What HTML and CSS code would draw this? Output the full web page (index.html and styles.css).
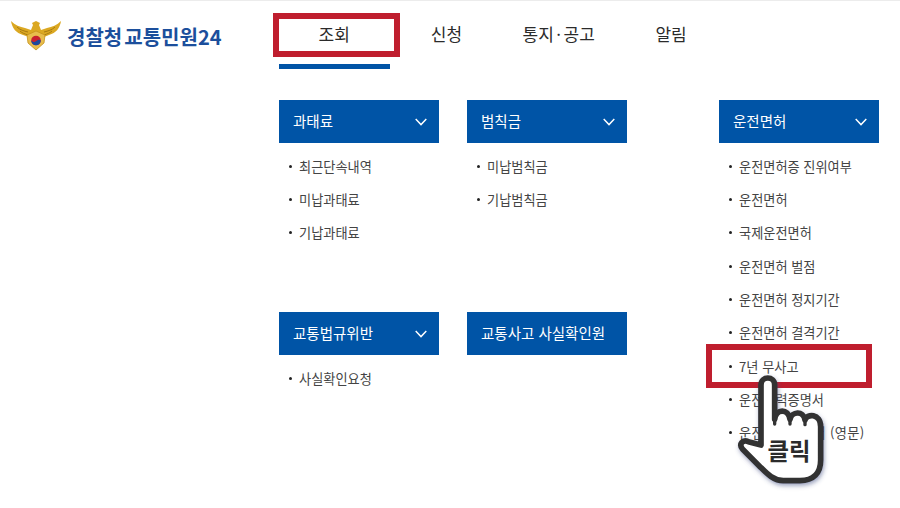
FILE: index.html
```html
<!DOCTYPE html>
<html lang="ko">
<head>
  <meta charset="UTF-8" />
  <meta name="viewport" content="width=device-width, initial-scale=1.0" />
  <title>경찰청 교통민원24</title>
  <link rel="stylesheet" href="styles.css">
</head>
<body>
  <div class="page">
    <header class="top">
      <a class="logo" href="#">
        <svg class="emblem" viewBox="0 0 50 32" width="50" height="32" aria-hidden="true">
          <path d="M0 1 C4 5 9 7 14 8 L20 10 L22 5 L21 3 L25 1 L29 3 L28 5 L30 10 L36 8 C41 7 46 5 50 1 C49 8 45 13 38 15 L33 17 L18 17 L12 15 C5 13 1 8 0 1 Z" fill="#dba822"/>
          <path d="M6 7 C9 10 13 11 17 12 M44 7 C41 10 37 11 33 12 M9 11 C11 13 14 14 17 15 M41 11 C39 13 36 14 33 15" fill="none" stroke="#a87a10" stroke-width="1"/>
          <path d="M16 15 L25 11 L34 15 L33 23 L25 30 L17 23 Z" fill="#e8bd4c" stroke="#c4921a" stroke-width=".8"/>
          <circle cx="25" cy="20.5" r="4.8" fill="#c8202f"/>
          <path d="M20.2 20.5 A4.8 4.8 0 0 0 29.8 20.5 C28.2 19 26.6 19.8 25 21.2 C23.4 22.6 21.6 22 20.2 20.5 Z" fill="#1c4a9c"/>
        </svg>
        <span class="logo-text">경찰청 교통민원24</span>
      </a>
      <nav class="gnb">
        <a class="gnb-item active" href="#">조회</a>
        <a class="gnb-item" href="#">신청</a>
        <a class="gnb-item" href="#">통지<span class="dot">·</span>공고</a>
        <a class="gnb-item" href="#">알림</a>
      </nav>
    </header>

    <main class="menu">
      <section class="group">
        <h2 class="group-title">과태료
          <svg class="chevron" viewBox="0 0 12 8" width="12" height="8"><path d="M.7.9 6 6.6 11.3.9" /></svg>
        </h2>
        <ul class="links">
          <li>최근단속내역</li>
          <li>미납과태료</li>
          <li>기납과태료</li>
        </ul>
      </section>
      <section class="group">
        <h2 class="group-title">범칙금
          <svg class="chevron" viewBox="0 0 12 8" width="12" height="8"><path d="M.7.9 6 6.6 11.3.9" /></svg>
        </h2>
        <ul class="links">
          <li>미납범칙금</li>
          <li>기납범칙금</li>
        </ul>
      </section>
      <section class="group group-tall">
        <h2 class="group-title">운전면허
          <svg class="chevron" viewBox="0 0 12 8" width="12" height="8"><path d="M.7.9 6 6.6 11.3.9" /></svg>
        </h2>
        <ul class="links">
          <li>운전면허증 진위여부</li>
          <li>운전면허</li>
          <li>국제운전면허</li>
          <li>운전면허 벌점</li>
          <li>운전면허 정지기간</li>
          <li>운전면허 결격기간</li>
          <li>7년 무사고</li>
          <li>운전경력증명서</li>
          <li class="wide">운전경력증명서 (영문)</li>
        </ul>
      </section>
      <section class="group">
        <h2 class="group-title">교통법규위반
          <svg class="chevron" viewBox="0 0 12 8" width="12" height="8"><path d="M.7.9 6 6.6 11.3.9" /></svg>
        </h2>
        <ul class="links">
          <li>사실확인요청</li>
        </ul>
      </section>
      <section class="group">
        <h2 class="group-title">교통사고 사실확인원</h2>
      </section>
    </main>

    <!-- 안내용 표시 -->
    <div class="mark mark-nav"></div>
    <div class="mark mark-item"></div>
    <svg class="hand" viewBox="0 0 630 534" width="210" height="178" aria-hidden="true">
      <defs>
        <filter id="handShadow" x="-20%" y="-20%" width="140%" height="140%">
          <feDropShadow dx="3" dy="7" stdDeviation="6" flood-color="#3a4a80" flood-opacity=".5"/>
        </filter>
      </defs>
      <path class="hand-shape" filter="url(#handShadow)" d="M213 345 L213 165 C213 137 254 137 254 165 L254 268 C258 235 295 235 300 268 C305 245 340 240 345 270 C350 250 392 250 392 290 L392 390 C392 430 370 452 330 452 L280 452 C250 452 230 430 210 410 L158 358 C145 342 158 328 175 335 Z"/>
      <path class="hand-line" d="M254 268 L254 282 M300 268 L300 282 M345 270 L345 284"/>
      <text class="hand-text" x="297" y="389">클릭</text>
    </svg>
  </div>
</body>
</html>
```

FILE: styles.css
```css
* {
  box-sizing: border-box;
}
body {
  margin: 0;
  font-family: "Noto Sans CJK KR", "Noto Sans", sans-serif;
  background: #fff;
  color: #333;
  overflow: hidden;
}
.page {
  position: relative;
  height: 508px;
  border-top: 1px solid #ececec;
}
a {
  color: inherit;
  text-decoration: none;
}

/* header */
.top {
  display: grid;
  grid-template-columns: 279px 1fr;
  height: 68px;
}
.logo {
  display: flex;
  align-items: flex-start;
  padding: 19px 0 0 11px;
}
.emblem {
  flex: none;
}
.logo-text {
  margin: 1px 0 0 6px;
  font-size: 20px;
  font-weight: 700;
  line-height: 32px;
  word-spacing: -3.5px;
  white-space: nowrap;
  color: #1c4f9c;
}
.gnb {
  display: flex;
  margin-left: -1px;
}
.gnb-item {
  width: 112.3px;
  padding-top: 19px;
  text-align: center;
  font-size: 17px;
  line-height: 28px;
  color: #2b2b2b;
}
.gnb-item .dot {
  margin: 0 2.5px;
}
.gnb-item.active {
  margin-left: 1px;
  width: 111.3px;
  padding-right: 1px;
  border-bottom: 5px solid #0054a6;
}

/* menu */
.menu {
  display: grid;
  grid-template-columns: 160px 160px 224px;
  grid-template-rows: 212px auto;
  column-gap: 28px;
  margin: 31px 0 0 279px;
}
.group-tall {
  grid-column: 3;
  grid-row: 1 / span 2;
  margin-left: 64px;
}
.group-title {
  display: flex;
  align-items: center;
  justify-content: space-between;
  height: 43px;
  margin: 0;
  padding: 0 12px 2px 14px;
  background: #0054a6;
  color: #fff;
  font-size: 14.5px;
  font-weight: 400;
}
.chevron {
  fill: none;
  stroke: #fff;
  stroke-width: 1.4;
  margin-top: 2px;
}
.links {
  list-style: none;
  margin: 0;
  padding: 6.5px 0 0;
}
.links li {
  position: relative;
  height: 33.35px;
  padding-left: 20px;
  font-size: 13.2px;
  line-height: 33.35px;
  white-space: nowrap;
  color: #444;
}
.links li.wide {
  letter-spacing: 0.3px;
}
.links li::before {
  content: "";
  position: absolute;
  left: 10px;
  top: 15px;
  width: 3px;
  height: 3px;
  border-radius: 50%;
  background: #222;
}

/* annotations */
.mark {
  position: absolute;
  border: 6px solid #bf1e2e;
}
.mark-nav {
  left: 273px;
  top: 12px;
  width: 127px;
  height: 44px;
}
.mark-item {
  left: 706px;
  top: 343px;
  width: 166px;
  height: 44px;
}
.hand {
  position: absolute;
  left: 690px;
  top: 329px;
}
.hand-shape {
  fill: #fff;
  stroke: #333;
  stroke-width: 17;
  stroke-linejoin: round;
}
.hand-line {
  fill: none;
  stroke: #333;
  stroke-width: 10;
  stroke-linecap: round;
}
.hand-text {
  font-size: 70px;
  font-weight: 700;
  text-anchor: middle;
  fill: #2b2b2b;
}
```
